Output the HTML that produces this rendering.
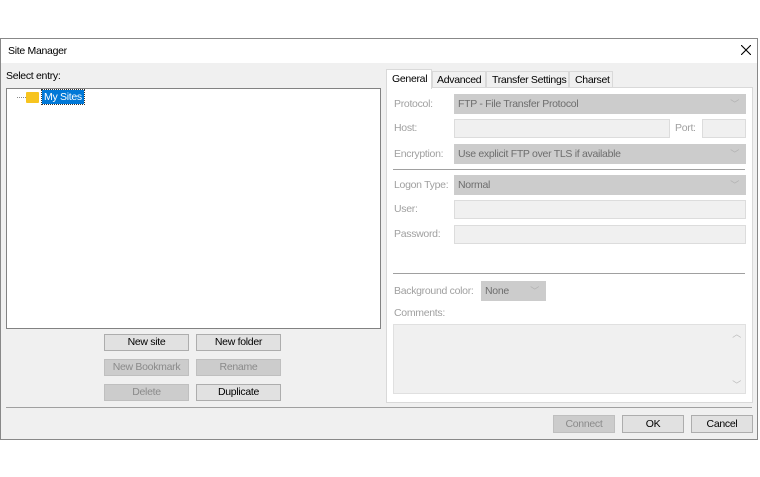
<!DOCTYPE html><html><head><style>
body{margin:0;width:760px;height:477px;background:#fff;font-family:"Liberation Sans",sans-serif;font-size:10.5px;letter-spacing:-0.3px;position:relative;overflow:hidden;color:#000}
div,span{position:absolute;box-sizing:border-box;white-space:nowrap}
.btn{background:#e1e1e1;border:1px solid #adadad;text-align:center;line-height:15px;height:17px}
.dis{background:#cccccc;border-color:#bfbfbf;color:#8a8a8a}
.lbl{color:#a0a0a0}
.fld{background:#cccccc;border:1px solid #cccccc;color:#6d6d6d;height:20px;line-height:18px;padding-left:3px}
.in{background:#f0f0f0;border:1px solid #dcdcdc;height:19px}
.chev{right:6px;top:0;color:#b0b0b0;font-size:9px}
</style></head><body>
<div style="left:0;top:38px;width:758px;height:402px;border:1px solid #888;background:#f0f0f0"></div>
<div style="left:1px;top:39px;width:756px;height:24px;background:#fff"></div>
<span style="left:8px;top:45px">Site Manager</span>
<svg style="position:absolute;left:741px;top:45px" width="10" height="10"><path d="M0 0L10 10M10 0L0 10" stroke="#000" stroke-width="1.1"/></svg>
<span style="left:6px;top:70px">Select entry:</span>
<div style="left:6px;top:88px;width:375px;height:241px;background:#fff;border:1px solid #828282"></div>
<div style="left:17px;top:97px;width:9px;border-top:1px dotted #888"></div>
<div style="left:26px;top:92px;width:13px;height:11px;background:#f7c41f;border-radius:1px"></div>
<span style="left:42px;top:90px;background:#0078d7;color:#fff;padding:0 2px;line-height:14px;outline:1px dotted #333">My Sites</span>
<div class="btn" style="left:104px;top:334px;width:85px">New site</div>
<div class="btn" style="left:196px;top:334px;width:85px">New folder</div>
<div class="btn dis" style="left:104px;top:359px;width:85px">New Bookmark</div>
<div class="btn dis" style="left:196px;top:359px;width:85px">Rename</div>
<div class="btn dis" style="left:104px;top:384px;width:85px">Delete</div>
<div class="btn" style="left:196px;top:384px;width:85px">Duplicate</div>
<div style="left:386px;top:87px;width:367px;height:316px;background:#fff;border:1px solid #d9d9d9"></div>
<div style="left:386px;top:69px;width:46px;height:20px;background:#fff;border:1px solid #d9d9d9;border-bottom:none;padding:3px 0 0 5px">General</div>
<div style="left:432px;top:71px;width:54px;height:17px;border:1px solid #d9d9d9;border-bottom:none;padding:2px 0 0 4px">Advanced</div>
<div style="left:486px;top:71px;width:83px;height:17px;border:1px solid #d9d9d9;border-bottom:none;padding:2px 0 0 5px">Transfer Settings</div>
<div style="left:569px;top:71px;width:44px;height:17px;border:1px solid #d9d9d9;border-bottom:none;padding:2px 0 0 5px">Charset</div>
<span class="lbl" style="left:394px;top:98px">Protocol:</span>
<div class="fld" style="left:454px;top:94px;width:292px">FTP - File Transfer Protocol<span class="chev">﹀</span></div>
<span class="lbl" style="left:394px;top:122px">Host:</span>
<div class="in" style="left:454px;top:119px;width:216px"></div>
<span class="lbl" style="left:675px;top:122px">Port:</span>
<div class="in" style="left:702px;top:119px;width:44px"></div>
<span class="lbl" style="left:394px;top:148px">Encryption:</span>
<div class="fld" style="left:454px;top:144px;width:292px">Use explicit FTP over TLS if available<span class="chev">﹀</span></div>
<div style="left:393px;top:169px;width:352px;border-top:1px solid #a0a0a0"></div>
<span class="lbl" style="left:394px;top:179px">Logon Type:</span>
<div class="fld" style="left:454px;top:175px;width:292px">Normal<span class="chev">﹀</span></div>
<span class="lbl" style="left:394px;top:203px">User:</span>
<div class="in" style="left:454px;top:200px;width:292px"></div>
<span class="lbl" style="left:394px;top:228px">Password:</span>
<div class="in" style="left:454px;top:225px;width:292px"></div>
<div style="left:393px;top:273px;width:352px;border-top:1px solid #a0a0a0"></div>
<span class="lbl" style="left:394px;top:285px">Background color:</span>
<div class="fld" style="left:481px;top:281px;width:65px">None<span class="chev">﹀</span></div>
<span class="lbl" style="left:394px;top:307px">Comments:</span>
<div class="in" style="left:393px;top:324px;width:353px;height:70px;border-color:#e0e0e0"><span style="right:4px;top:2px;color:#bbb;font-size:9px">︿</span><span style="right:4px;bottom:2px;color:#bbb;font-size:9px">﹀</span></div>
<div style="left:6px;top:407px;width:746px;border-top:1px solid #a0a0a0"></div>
<div class="btn dis" style="left:553px;top:415px;width:62px;height:18px;line-height:16px">Connect</div>
<div class="btn" style="left:622px;top:415px;width:62px;height:18px;line-height:16px">OK</div>
<div class="btn" style="left:691px;top:415px;width:62px;height:18px;line-height:16px">Cancel</div>
</body></html>
